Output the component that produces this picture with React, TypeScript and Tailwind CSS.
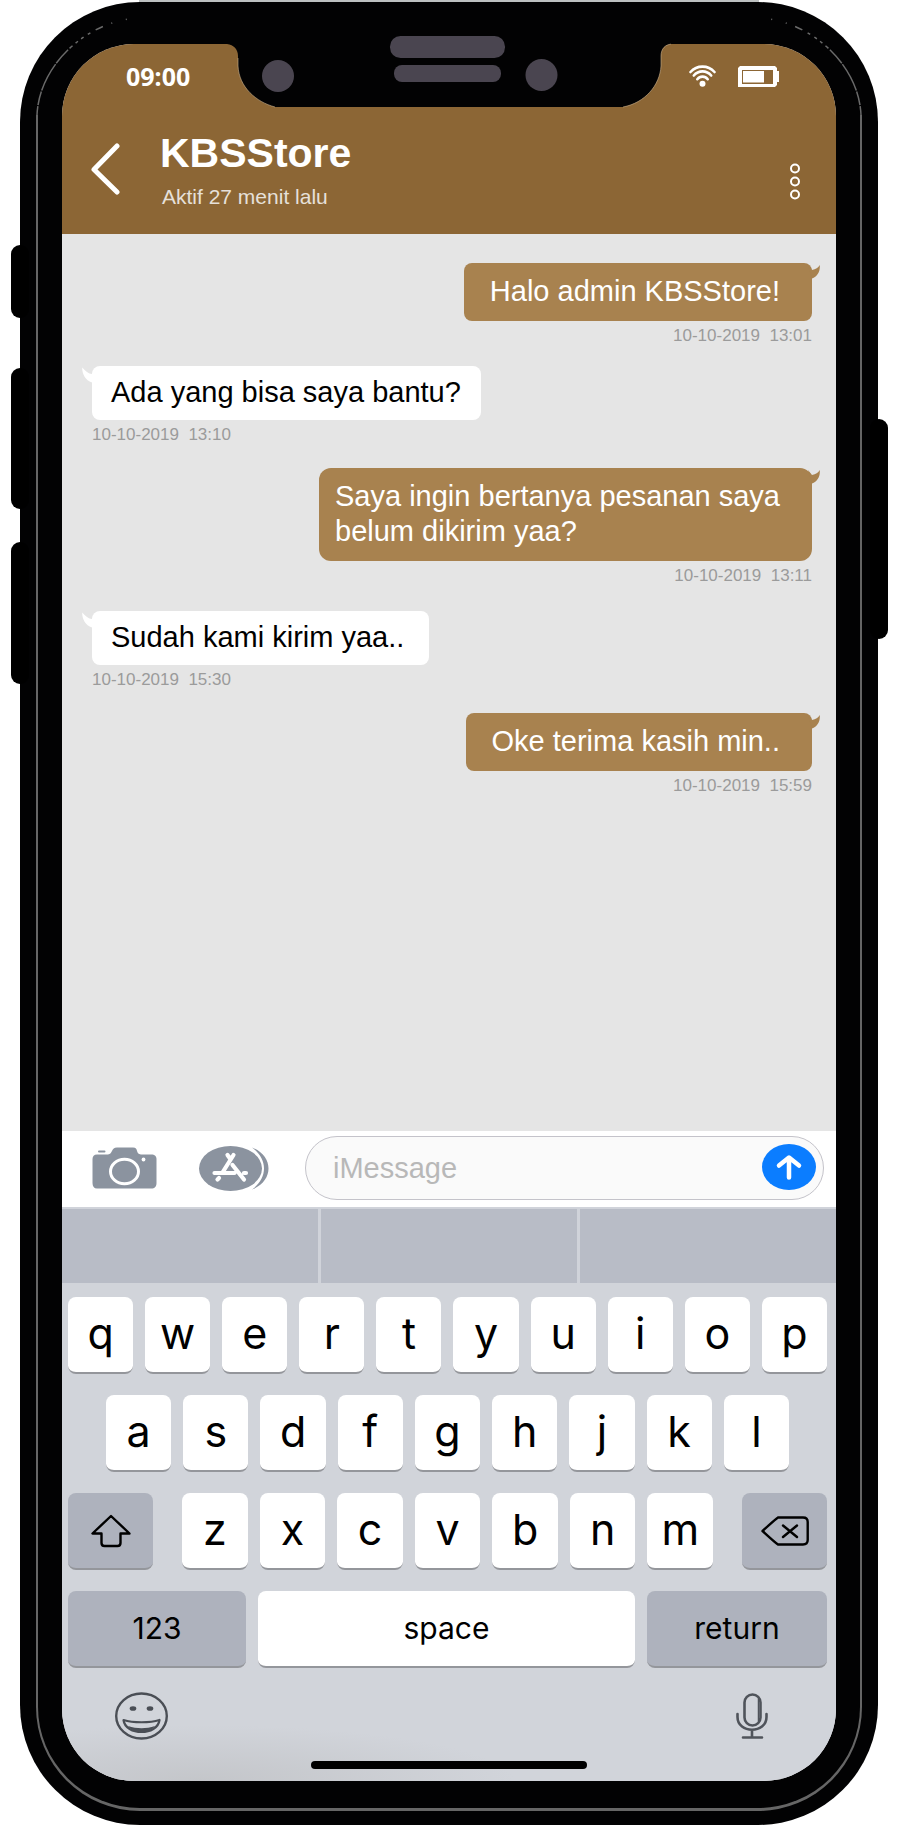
import React from "react";

type Message = {
  from: "store" | "me";
  lines: string[];
  date: string;
  time: string;
  bubble: string;
  spacing: string;
};

const messages: Message[] = [
  { from: "me", lines: ["Halo admin KBSStore!"], date: "10-10-2019", time: "13:01", bubble: "rounded-lg pl-[26px] pr-8", spacing: "mb-5" },
  { from: "store", lines: ["Ada yang bisa saya bantu?"], date: "10-10-2019", time: "13:10", bubble: "pl-[19px] pr-5", spacing: "mb-[23px]" },
  { from: "me", lines: ["Saya ingin bertanya pesanan saya", "belum dikirim yaa?"], date: "10-10-2019", time: "13:11", bubble: "rounded-xl pl-4 pr-8", spacing: "mb-[25px]" },
  { from: "store", lines: ["Sudah kami kirim yaa.."], date: "10-10-2019", time: "15:30", bubble: "pl-[19px] pr-[25px]", spacing: "mb-[23px]" },
  { from: "me", lines: ["Oke terima kasih min.."], date: "10-10-2019", time: "15:59", bubble: "rounded-lg pl-[26px] pr-8", spacing: "mb-0" },
];

function Notch() {
  return (
    <svg className="absolute left-1/2 top-[28px] -translate-x-1/2" width="444" height="78" viewBox="227 30 444 78" aria-hidden="true">
      <path d="M225 30V44C233 44 238 49 238 56V66C239 87 256 102 275 107H623C645 103 660 85 661 66V56C661 49 665 44 673 44V30Z" fill="#020203" />
      <path d="M238 58V66C239 87 256 102 275 107M623 107C645 103 660 85 661 66V56C661 49 665 44 673 44" fill="none" stroke="#c9b08d" strokeOpacity=".6" strokeWidth="1" />
      <rect x="390" y="36" width="115" height="22" rx="10.5" fill="#4a4550" />
      <rect x="394" y="65" width="107" height="17" rx="8" fill="#4a4550" />
      <circle cx="278" cy="76" r="16" fill="#4a4550" />
      <circle cx="541.5" cy="75" r="16" fill="#4a4550" />
    </svg>
  );
}

function EdgeShine({ className }: { className: string }) {
  return (
    <svg className={className} width="104" height="100" viewBox="0 0 104 100" fill="none" aria-hidden="true">
      <path d="M2 99C4 50 50 6 102 2" stroke="#6a6a6a" strokeWidth="1.5" strokeDasharray="9 1 14 1 30 1 18 2 4 4 3 4 3 5 3 6 8" />
    </svg>
  );
}

function StatusBar() {
  return (
    <div className="flex h-16 items-center justify-between pl-16 pr-[57px] text-white">
      <time className="font-['Noto_Sans','Open_Sans',sans-serif] text-[25px] leading-8 font-bold">09:00</time>
      <div className="flex items-center gap-[22px]">
        <svg width="27" height="22" viewBox="0 0 27 22" fill="none" stroke="#fff" strokeLinecap="round" aria-label="Wi-Fi">
          <path d="M1.5 7C8-.2 19-.2 25.500 7" strokeWidth="2.600" />
          <path d="M4.800 10.500C9.500 5 17.500 5 22.200 10.500" strokeWidth="2.600" />
          <path d="M8.300 14.200C11 10.700 16 10.700 18.700 14.200" strokeWidth="2.600" />
          <circle cx="13.500" cy="18.700" r="3" fill="#fff" stroke="none" />
        </svg>
        <svg width="41" height="21" viewBox="0 0 41 21" fill="#fff" aria-label="Battery">
          <path fillRule="evenodd" d="M2 0H37L39 2V5H41V16H39V19L37 21H0V2ZM4 4V18H35V16H35V5V4Z" />
          <rect x="5" y="5" width="21" height="11.500" />
        </svg>
      </div>
    </div>
  );
}

function ChatHeader() {
  return (
    <div className="flex items-center pt-[21px] pr-9 pb-[25px] pl-[29px]">
      <button type="button" aria-label="Kembali" className="shrink-0">
        <svg width="29" height="52" viewBox="0 0 29 52" fill="none" stroke="#fff" strokeWidth="5" strokeLinecap="round" strokeLinejoin="round">
          <path d="M26 3L3 26.500L26 49" />
        </svg>
      </button>
      <div className="ml-10 flex-1">
        <h1 className="text-[41px] leading-[48px] font-bold text-white">KBSStore</h1>
        <p className="mt-2 pl-0.5 text-[21px] leading-6 text-[#e6e0da]">Aktif 27 menit lalu</p>
      </div>
      <button type="button" aria-label="Menu" className="mb-[9px] self-end">
        <svg width="10" height="37" viewBox="0 0 10 37" fill="none" stroke="#fff" strokeWidth="2">
          <circle cx="5" cy="5.500" r="4" />
          <circle cx="5" cy="18.500" r="4" />
          <circle cx="5" cy="31.500" r="4" />
        </svg>
      </button>
    </div>
  );
}

function MessageItem({ message }: { message: Message }) {
  const mine = message.from === "me";
  const bubbleTone = mine
    ? "bg-[#a8824f] pt-[11px] pb-3 text-white"
    : "rounded-lg bg-white pt-[9px] pb-2.5 text-black";
  return (
    <li className={`flex flex-col ${mine ? "items-end" : "items-start"} ${message.spacing}`}>
      <div className={`relative text-[29px] leading-[35px] ${bubbleTone} ${message.bubble}`}>
        {mine ? (
          <svg className="absolute top-0 -right-2" width="12" height="18" viewBox="0 0 12 18" fill="#a8824f" aria-hidden="true">
            <path d="M0 2L4 7C8 6 10 5 11.700 2C12.500 8 9.500 13.500 4 15.500Z" />
          </svg>
        ) : (
          <svg className="absolute top-0 -left-2.5" width="14" height="18" viewBox="0 0 14 18" fill="#fff" aria-hidden="true">
            <path d="M14 3L10 8C6.500 8 3.500 5 .200 1.500C0 8 3.500 14.500 10 16.500Z" />
          </svg>
        )}
        {message.lines.map((line) => (
          <p key={line}>{line}</p>
        ))}
      </div>
      <time className="mt-[5px] text-[17px] leading-5 whitespace-pre text-[#9b9b9b]">
        {`${message.date}  ${message.time}`}
      </time>
    </li>
  );
}

function Composer() {
  return (
    <form className="flex items-center bg-white pt-[5px] pr-3 pb-[7px] pl-[30px]" onSubmit={(e) => e.preventDefault()}>
      <button type="button" aria-label="Kamera" className="shrink-0">
        <svg width="65" height="42" viewBox="0 0 65 42" fill="#8b939f">
          <path d="M5 7.500H16C21 7 19 .500 25 .500H41C47 .500 43 7 49 7.500H59C63 7.500 64.500 9.500 64.500 12V36C64.500 39.500 63 41.500 59 41.500H5C2 41.500 .500 39.500 .500 36V12C.500 9.500 2 7.500 5 7.500Z" />
          <rect x="6" y="3.500" width="7.500" height="2" rx="1" />
          <ellipse cx="32.500" cy="24.500" rx="14" ry="12.300" fill="none" stroke="#fff" strokeWidth="3" />
          <circle cx="51.500" cy="12.500" r="1.900" fill="#fff" />
        </svg>
      </button>
      <button type="button" aria-label="Aplikasi" className="ml-[42px] shrink-0">
        <svg width="70" height="45" viewBox="0 0 70 45" fill="#8b939f">
          <path d="M53 1.500C75 10 75 35 53 43.500C69 32 69 13 53 1.500Z" />
          <ellipse cx="31.500" cy="22.500" rx="31.500" ry="22.500" />
          <g stroke="#fff" strokeWidth="4.200" strokeLinecap="round" fill="none">
            <path d="M28.500 9L31 12.500M34.500 9L23.500 26.500M15.500 27H35.500M45 27H47M33.500 19L45 33.500M20 32L18.500 33.500" />
          </g>
        </svg>
      </button>
      <div className="relative ml-9 min-w-0 flex-1">
        <input
          type="text"
          aria-label="iMessage"
          placeholder="iMessage"
          className="h-16 w-full rounded-full border border-[#c4c3ca] bg-[#fafafa] pr-20 pl-[27px] text-[29px] leading-[35px] text-black placeholder:text-[#b8b8b8] placeholder:opacity-100"
        />
        <button type="submit" aria-label="Kirim" className="absolute top-2 right-2">
          <svg width="54" height="46" viewBox="0 0 54 46" fill="none">
            <ellipse cx="27" cy="23" rx="27" ry="23" fill="#0b7dff" />
            <path d="M27 14V33.500M17 21.500L27 13.500L37 21.500" stroke="#fff" strokeWidth="4.500" strokeLinecap="round" strokeLinejoin="round" />
          </svg>
        </button>
      </div>
    </form>
  );
}

const keyBase = "flex h-[77px] items-center justify-center rounded-lg border-b-2 border-[#94969b] text-black";
const lightKey = "bg-white";
const darkKey = "bg-[#aeb2bd]";

function LetterKeys({ letters }: { letters: string }) {
  return (
    <>
      {letters.split("").map((letter) => (
        <button key={letter} type="button" className={`${keyBase} ${lightKey} min-w-0 flex-1 pb-1 text-[43px] leading-[52px]`}>
          {letter}
        </button>
      ))}
    </>
  );
}

function Keyboard() {
  return (
    <div className="bg-[#d1d4da] font-[Inter,sans-serif]">
      <div className="flex h-[76px] border-t-2 border-[#d0d3da] bg-[#b8bcc6]">
        <button type="button" aria-label="Saran 1" className="flex-1 border-r-[3px] border-[#d0d3da]" />
        <button type="button" aria-label="Saran 2" className="flex-1 border-r-[3px] border-[#d0d3da]" />
        <button type="button" aria-label="Saran 3" className="flex-1" />
      </div>
      <div className="flex flex-col gap-[21px] pt-3.5 pr-[9px] pl-1.5">
        <div className="flex gap-3">
          <LetterKeys letters="qwertyuiop" />
        </div>
        <div className="flex gap-3 px-[38px]">
          <LetterKeys letters="asdfghjkl" />
        </div>
        <div className="flex justify-between gap-[29px]">
          <button type="button" aria-label="Shift" className={`${keyBase} ${darkKey} w-[85px] shrink-0`}>
            <svg width="42" height="34" viewBox="0 0 42 34" fill="none" stroke="#000" strokeWidth="2.400" strokeLinejoin="round">
              <path d="M21 2L2.500 19.500H11.500V29C11.500 31 12.500 32 14.500 32H27.500C29.500 32 30.500 31 30.500 29V19.500H39.500Z" />
            </svg>
          </button>
          <div className="flex min-w-0 flex-1 gap-3">
            <LetterKeys letters="zxcvbnm" />
          </div>
          <button type="button" aria-label="Hapus" className={`${keyBase} ${darkKey} w-[85px] shrink-0`}>
            <svg width="48" height="30" viewBox="0 0 48 30" fill="none" stroke="#000" strokeWidth="2.400" strokeLinejoin="round" strokeLinecap="round">
              <path d="M17 1.500H42C45.500 1.500 46.700 3 46.700 6V24C46.700 27 45.500 28.500 42 28.500H17C14 26.500 7 20 1.500 15C7 10 14 3.500 17 1.500Z" />
              <path d="M22 9.500L36 21M36 9.500L22 21" />
            </svg>
          </button>
        </div>
        <div className="flex gap-3 text-[30px] leading-9">
          <button type="button" className={`${keyBase} ${darkKey} w-[178px] shrink-0 pb-0.5`}>123</button>
          <button type="button" className={`${keyBase} ${lightKey} min-w-0 flex-1 pb-0.5`}>space</button>
          <button type="button" className={`${keyBase} ${darkKey} w-[180px] shrink-0 pb-0.5`}>return</button>
        </div>
      </div>
      <div className="flex flex-col items-center bg-[radial-gradient(ellipse_at_18%_100%,#c4c6ca,transparent_35%)] pt-6 pb-3">
        <div className="flex w-full items-center justify-between pr-[68px] pl-[53px]">
          <button type="button" aria-label="Emoji">
            <svg width="53" height="48" viewBox="0 0 53 48" fill="none" stroke="#4a4e55">
              <ellipse cx="26.500" cy="24" rx="25.300" ry="22.500" strokeWidth="2.400" />
              <ellipse cx="18" cy="16.500" rx="3.300" ry="2.300" fill="#4a4e55" stroke="none" />
              <ellipse cx="35" cy="16.500" rx="3.300" ry="2.300" fill="#4a4e55" stroke="none" />
              <path d="M8.500 28C18 31 35 31 44.500 28C42.500 44 10.500 44 8.500 28Z" strokeWidth="2.200" strokeLinejoin="round" />
              <path d="M13 34C22 37 31 37 40 34C34 42 19 42 13 34Z" fill="#4a4e55" stroke="none" />
            </svg>
          </button>
          <button type="button" aria-label="Mikrofon">
            <svg width="32" height="46" viewBox="0 0 32 46" fill="none" stroke="#50545b" strokeWidth="2.600" strokeLinecap="round">
              <rect x="8.500" y="1.500" width="16" height="31" rx="8" />
              <path d="M22.500 6V28" strokeWidth="1.500" />
              <path d="M1.500 21V24C1.500 41 30.500 41 30.500 24V21M16 37V44M7 44.500H26" />
            </svg>
          </button>
        </div>
        <div className="mt-[21px] h-2 w-[276px] rounded-full bg-black" />
      </div>
    </div>
  );
}

export default function App() {
  return (
    <div className="flex min-h-screen flex-col bg-white px-5 font-['Liberation_Sans',Arial,sans-serif]">
      <div className="mx-[119px] h-0.5 bg-[#bcc0c0]" />
      <main className="relative flex flex-1 flex-col rounded-[120px] bg-[#020203] px-[42px] pt-[42px] pb-11">
        <div className="absolute top-[243px] -left-[9px] h-[73px] w-[18px] rounded-[9px] bg-black" />
        <div className="absolute top-[366px] -left-[9px] h-[141px] w-[18px] rounded-[9px] bg-black" />
        <div className="absolute top-[540px] -left-[9px] h-[142px] w-[18px] rounded-[9px] bg-black" />
        <div className="absolute top-[417px] -right-[10px] h-[220px] w-[18px] rounded-[9px] bg-black" />
        <div className="absolute top-[113px] right-4 bottom-3.5 left-4 rounded-b-[104px] border-x-2 border-b-[3px] border-[#666]" />
        <EdgeShine className="absolute top-[14px] left-[15px]" />
        <EdgeShine className="absolute top-[14px] right-[15px] -scale-x-100" />

        <div className="relative flex flex-1 flex-col overflow-hidden rounded-[72px] bg-[#e5e5e5]">
          <header className="bg-[#8c6635]">
            <StatusBar />
            <ChatHeader />
          </header>
          <ul className="flex-1 pt-[29px] pr-6 pb-8 pl-[30px]">
            {messages.map((message) => (
              <MessageItem key={message.time} message={message} />
            ))}
          </ul>
          <Composer />
          <Keyboard />
        </div>
        <Notch />
      </main>
    </div>
  );
}
